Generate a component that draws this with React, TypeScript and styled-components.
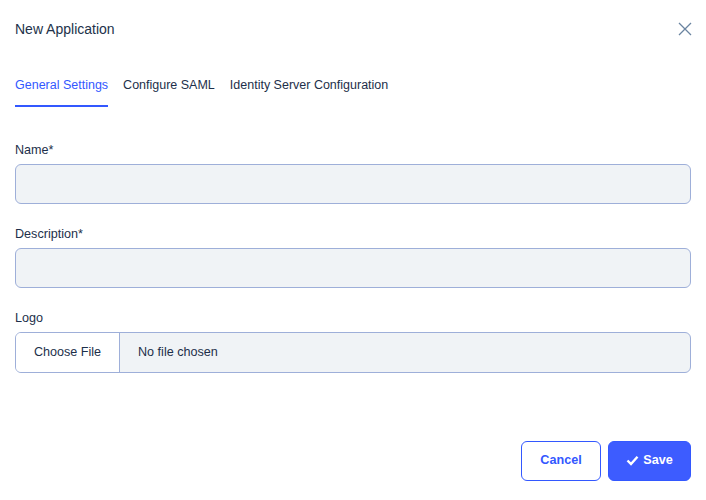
import styled, { createGlobalStyle } from 'styled-components'

const GlobalStyle = createGlobalStyle`
  html, body {
    margin: 0;
    padding: 0;
    background: #ffffff;
  }
  body {
    font-family: 'Liberation Sans', Arial, sans-serif;
    color: #1d2f4a;
  }
`

const Modal = styled.div`
  width: 706px;
  height: 500px;
  box-sizing: border-box;
  padding: 0 15px;
  display: flex;
  flex-direction: column;
  background: #fff;
`

const Header = styled.div`
  height: 58px;
  display: flex;
  align-items: center;
  justify-content: space-between;
`

const Title = styled.h2`
  margin: 0;
  font-size: 14px;
  font-weight: 400;
  line-height: 16px;
  color: #22324a;
`

const CloseButton = styled.button`
  border: 0;
  background: none;
  padding: 0;
  width: 16px;
  height: 16px;
  margin-right: -2px;
  display: flex;
  align-items: center;
  justify-content: center;
  cursor: pointer;
`

const TabList = styled.div`
  display: flex;
  gap: 15px;
`

const Tab = styled.button<{ $active?: boolean }>`
  border: 0;
  background: none;
  padding: 19px 0 12px;
  font-family: inherit;
  font-size: 12.5px;
  line-height: 16px;
  color: ${(p) => (p.$active ? '#3358ff' : '#1d2f4a')};
  border-bottom: 2px solid ${(p) => (p.$active ? '#3358ff' : 'transparent')};
  cursor: pointer;
`

const Form = styled.div`
  display: flex;
  flex-direction: column;
  padding-top: 35px;
  gap: 22px;
`

const Field = styled.div`
  display: flex;
  flex-direction: column;
  gap: 6px;
`

const Label = styled.label`
  font-size: 12.6px;
  line-height: 16px;
  color: #1d2f4a;
`

const TextInput = styled.input`
  box-sizing: border-box;
  height: 40px;
  width: 100%;
  border: 1px solid #9eafd9;
  border-radius: 6px;
  background: #f0f3f6;
  padding: 0 12px;
  font-family: inherit;
  font-size: 13px;
  outline: none;
`

const FileBox = styled.div`
  box-sizing: border-box;
  height: 41px;
  display: flex;
  border: 1px solid #9eafd9;
  border-radius: 6px;
  background: #f0f3f6;
  overflow: hidden;
`

const FileButton = styled.div`
  width: 103px;
  display: flex;
  align-items: center;
  justify-content: center;
  background: #fff;
  border-right: 1px solid #9eafd9;
  font-size: 12.6px;
  line-height: 16px;
  padding-bottom: 1px;
  color: #1d2f4a;
`

const FileName = styled.div`
  display: flex;
  align-items: center;
  padding-left: 18px;
  padding-bottom: 1px;
  font-size: 12.6px;
  line-height: 16px;
  color: #1d2f4a;
`

const Footer = styled.div`
  margin-top: auto;
  margin-bottom: 19px;
  display: flex;
  justify-content: flex-end;
  gap: 7px;
`

const Button = styled.button<{ $primary?: boolean }>`
  box-sizing: border-box;
  height: 40px;
  width: ${(p) => (p.$primary ? '83px' : '80px')};
  border-radius: 6px;
  border: 1px solid #3358ff;
  background: ${(p) => (p.$primary ? '#3d5cff' : '#ffffff')};
  color: ${(p) => (p.$primary ? '#ffffff' : '#3358ff')};
  font-family: inherit;
  font-weight: 700;
  font-size: 12.6px;
  line-height: 16px;
  padding: 0 0 2px;
  display: flex;
  align-items: center;
  justify-content: center;
  gap: 4px;
  cursor: pointer;
`

export default function App() {
  return (
    <>
      <GlobalStyle />
      <Modal>
        <Header>
          <Title>New Application</Title>
          <CloseButton aria-label="Close">
            <svg width="14" height="14" viewBox="0 0 14 14">
              <path d="M1 1L13 13M13 1L1 13" stroke="#6a84a0" strokeWidth="1.3" />
            </svg>
          </CloseButton>
        </Header>
        <TabList>
          <Tab $active>General Settings</Tab>
          <Tab>Configure SAML</Tab>
          <Tab>Identity Server Configuration</Tab>
        </TabList>
        <Form>
          <Field>
            <Label>Name*</Label>
            <TextInput />
          </Field>
          <Field>
            <Label>Description*</Label>
            <TextInput />
          </Field>
          <Field>
            <Label>Logo</Label>
            <FileBox>
              <FileButton>Choose File</FileButton>
              <FileName>No file chosen</FileName>
            </FileBox>
          </Field>
        </Form>
        <Footer>
          <Button>Cancel</Button>
          <Button $primary>
            <svg width="13" height="11" viewBox="0 0 13 11">
              <path d="M1.5 5.5L5 9L11.5 1.8" fill="none" stroke="#fff" strokeWidth="2.4" />
            </svg>
            Save
          </Button>
        </Footer>
      </Modal>
    </>
  )
}
